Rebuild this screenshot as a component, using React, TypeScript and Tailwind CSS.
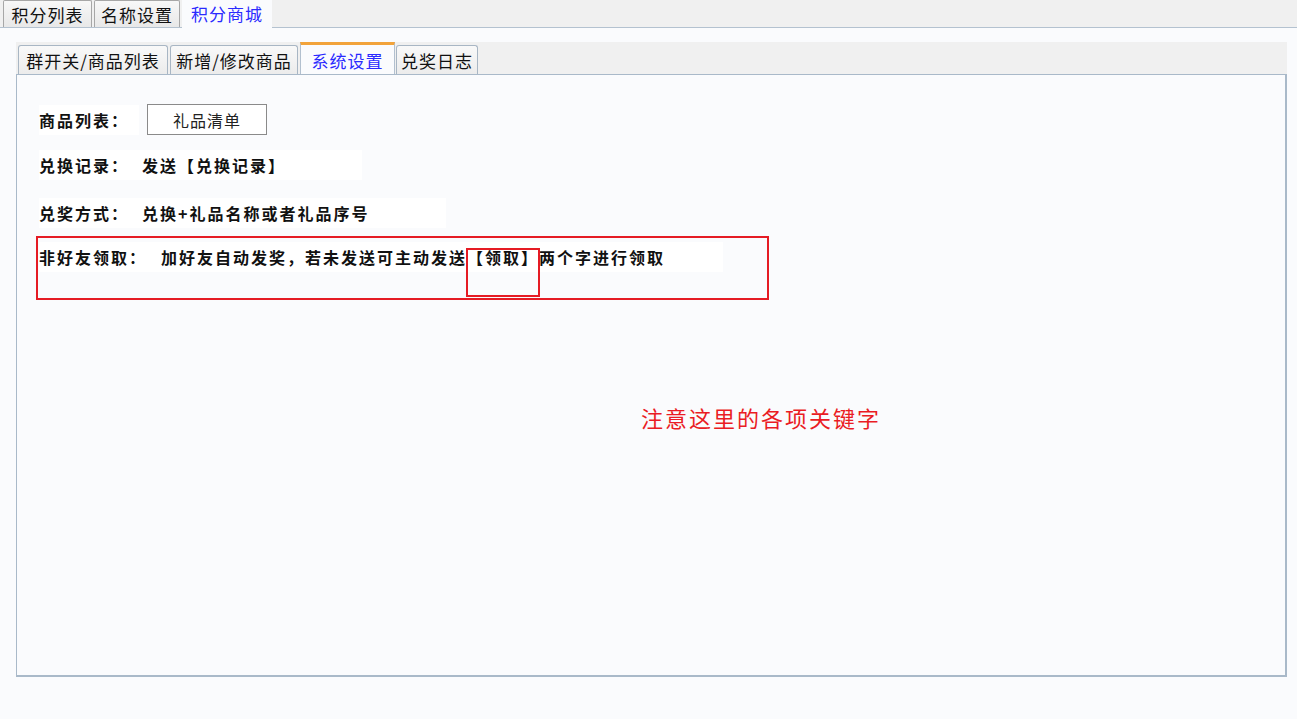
import React from "react";

const F = { fontFamily: '"Noto Sans CJK SC", "Noto Sans", sans-serif' };

function TopTab({ label, active, w }: { label: string; active?: boolean; w: number }) {
  if (active) {
    return (
      <div
        className="relative -mb-px h-[29px] flex items-center justify-center bg-[#fafbfd] text-[#2a2aff] text-[17px] tracking-[1px] leading-none"
        style={{ width: w }}
      >
        {label}
      </div>
    );
  }
  return (
    <div
      className="h-[27px] mt-px flex items-center justify-center border border-[#a7a7a7] border-b-0 rounded-t-[2px] bg-gradient-to-b from-[#f8f8f8] to-[#e8e8e8] text-[#111] text-[17px] tracking-[1px] leading-none"
      style={{ width: w }}
    >
      {label}
    </div>
  );
}

function InnerTab({ label, active, w }: { label: string; active?: boolean; w: number }) {
  if (active) {
    return (
      <div
        className="relative -mb-px h-[33px] mr-[1px] flex items-center justify-center bg-[#fafbfd] border-t-[3px] border-[#f2a33a] border-x border-x-[#b2c0cf] text-[#2a2aff] text-[17px] tracking-[1px] leading-none"
        style={{ width: w }}
      >
        {label}
      </div>
    );
  }
  return (
    <div
      className="h-[29px] flex items-center justify-center border border-[#a8b6c4] border-b-0 rounded-t-[3px] bg-gradient-to-b from-[#f9f9f9] to-[#ececec] text-[#111] text-[17px] tracking-[1px] leading-none mr-[2px]"
      style={{ width: w }}
    >
      {label}
    </div>
  );
}

export default function App() {
  return (
    <div className="w-[1297px] h-[719px] bg-[#fafbfd] overflow-hidden" style={F}>
      {/* top tab strip */}
      <div className="h-[28px] bg-[#f0f0f0] border-b border-[#b4c2d0] flex items-end pl-[3px] gap-[2px]">
        <TopTab label="积分列表" w={89} />
        <TopTab label="名称设置" w={86} />
        <TopTab label="积分商城" w={90} active />
      </div>

      <div className="pl-[16px] pr-[10px] pt-[14px]">
        {/* inner tab strip */}
        <div className="h-[32px] bg-[#f0f0f0] flex items-end pl-[2px]">
          <InnerTab label="群开关/商品列表" w={150} />
          <InnerTab label="新增/修改商品" w={128} />
          <InnerTab label="系统设置" w={95} active />
          <InnerTab label="兑奖日志" w={82} />
        </div>

        {/* panel */}
        <div className="h-[603px] border border-[#a9b9c9] border-r-2 border-b-2 bg-[#fafbfd] relative">
          <div className="pl-[22px] pt-[29px] text-[16px] font-bold text-[#111] tracking-[2px] leading-none">
            {/* row 1 */}
            <div className="flex items-center h-[31px]">
              <div className="bg-white h-[30px] flex items-center pr-[10px]">商品列表：</div>
              <div className="ml-[8px] w-[120px] h-[31px] border border-[#8a8a8a] bg-white flex items-center justify-center font-normal tracking-[1px] text-[#222]">
                礼品清单
              </div>
            </div>
            {/* row 2 */}
            <div className="flex mt-[15px]">
              <div className="bg-white h-[30px] flex items-center w-[323px]">
                <span className="w-[103px]">兑换记录：</span>
                <span>发送【兑换记录】</span>
              </div>
            </div>
            {/* row 3 */}
            <div className="flex mt-[18px]">
              <div className="bg-white h-[30px] flex items-center w-[407px]">
                <span className="w-[103px]">兑奖方式：</span>
                <span>兑换+礼品名称或者礼品序号</span>
              </div>
            </div>
            {/* row 4 red box */}
            <div className="relative -ml-[3px] mt-[8px] w-[733px] h-[64px] border-2 border-[#e51b24]">
              <div className="absolute left-[1px] top-[4px] bg-white h-[30px] w-[684px] flex items-center">
                <span className="w-[122px]">非好友领取：</span>
                <span>加好友自动发奖，若未发送可主动发送【领取】两个字进行领取</span>
              </div>
              <div className="absolute left-[428px] top-[10px] w-[74px] h-[49px] border-2 border-[#e51b24]" />
            </div>
          </div>

          <div className="absolute left-[624px] top-[331px] text-[22px] tracking-[2px] text-[#ea1c24] leading-none">
            注意这里的各项关键字
          </div>
        </div>
      </div>
    </div>
  );
}
